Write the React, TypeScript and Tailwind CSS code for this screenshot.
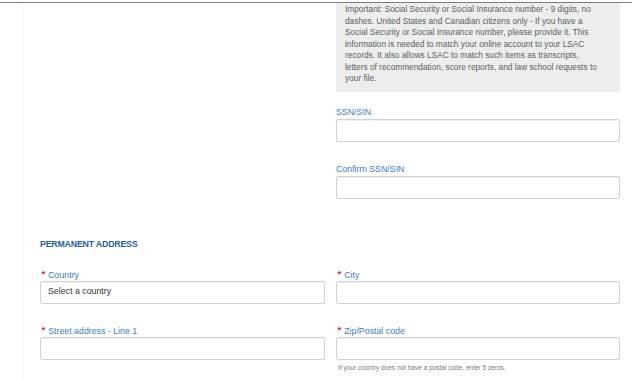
import type { ReactNode } from 'react';

const infoLines = [
  'Important: Social Security or Social Insurance number - 9 digits, no',
  'dashes. United States and Canadian citizens only - If you have a',
  'Social Security or Social Insurance number, please provide it. This',
  'information is needed to match your online account to your LSAC',
  'records. It also allows LSAC to match such items as transcripts,',
  'letters of recommendation, score reports, and law school requests to',
  'your file.',
];

const Label = ({ children, required }: { children: ReactNode; required?: boolean }) => (
  <div className="h-[11px] leading-[11px] text-[8.8px] text-[#3b7cbd] mb-[1px] whitespace-nowrap">
    {required && (
      <span className="relative -top-[1px] font-bold text-[9.5px] text-[#e3262b] ml-[1.5px] mr-[3px]">*</span>
    )}
    {children}
  </div>
);

const Input = ({ value }: { value?: string }) => (
  <div className="h-[23px] border border-[#d2d2d2] rounded-[2px] bg-white shadow-[inset_0_1px_1px_rgba(0,0,0,0.06)] flex items-center px-[7px] text-[8.8px] text-[#333]">
    {value}
  </div>
);

export default function App() {
  return (
    <div className="w-[632px] h-[379px] bg-white overflow-hidden font-['Liberation_Sans',Arial,sans-serif]">
      <div className="h-[2px]" />
      <div className="h-px bg-[#7d7d7d]" />

      <div className="ml-[23px] h-[376px] border-l border-[#f4f4f4] pl-[16px]">
        {/* identity row */}
        <div className="grid grid-cols-[285px_284px] gap-x-[11px]">
          <div />
          <div>
            <div className="bg-[#eceeee] pl-[9px] pt-[1px] pb-[7px] text-[8.3px] leading-[11.5px] text-[#5c5c5c] whitespace-nowrap">
              {infoLines.map((line) => (
                <div key={line}>{line}</div>
              ))}
            </div>
            <div className="mt-[15px]">
              <Label>SSN/SIN</Label>
              <Input />
            </div>
            <div className="mt-[22px]">
              <Label>Confirm SSN/SIN</Label>
              <Input />
            </div>
          </div>
        </div>

        {/* permanent address */}
        <div className="mt-[40px] h-[11px] leading-[11px] text-[8.8px] font-bold text-[#1f5f9f] tracking-[-0.2px]">
          PERMANENT ADDRESS
        </div>

        <div className="mt-[19px] grid grid-cols-[285px_284px] gap-x-[11px] gap-y-[21px]">
          <div>
            <Label required>Country</Label>
            <Input value="Select a country" />
          </div>
          <div>
            <Label required>City</Label>
            <Input />
          </div>
          <div>
            <Label required>Street address - Line 1</Label>
            <Input />
          </div>
          <div>
            <Label required>Zip/Postal code</Label>
            <Input />
            <div className="mt-[4px] pl-[2px] text-[6.5px] leading-[8px] text-[#777]">
              If your country does not have a postal code, enter 5 zeros.
            </div>
          </div>
        </div>
      </div>
    </div>
  );
}
